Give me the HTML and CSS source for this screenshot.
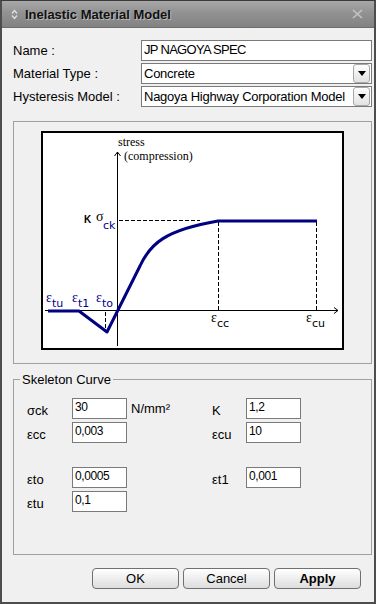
FILE: index.html
```html
<!DOCTYPE html>
<html>
<head>
<meta charset="utf-8">
<title>Inelastic Material Model</title>
<link rel="stylesheet" href="styles.css">
</head>
<body>
<div class="window">
  <div class="titlebar">
    <svg class="title-icon" width="7" height="11" viewBox="0 0 7 11">
      <path d="M1 4.5 L3.5 1.5 L6 4.5" fill="none" stroke="#e0e0e0" stroke-width="1.3"/>
      <path d="M1 6.5 L3.5 9.5 L6 6.5" fill="none" stroke="#e0e0e0" stroke-width="1.3"/>
    </svg>
    <span class="title">Inelastic Material Model</span>
    <svg class="close" width="11" height="10" viewBox="0 0 11 10">
      <path d="M1 1 L10 9 M10 1 L1 9" stroke="#c4c4c4" stroke-width="1.6"/>
    </svg>
  </div>
  <div class="content">
    <div class="row"><span class="lbl">Name :</span><div class="field name">JP NAGOYA SPEC</div></div>
    <div class="row"><span class="lbl">Material Type :</span><div class="field select"><span class="val">Concrete</span><span class="drop"><i class="tri"></i></span></div></div>
    <div class="row"><span class="lbl">Hysteresis Model :</span><div class="field select"><span class="val">Nagoya Highway Corporation Model</span><span class="drop"><i class="tri"></i></span></div></div>

    <div class="diagram-panel">
      <svg class="diagram" width="304" height="220" viewBox="41 131 304 220">
        <rect x="42" y="132" width="301" height="217" fill="#fff" stroke="#000" stroke-width="2"/>
        <g stroke="#000" stroke-width="1" fill="none">
          <line x1="117.5" y1="152" x2="117.5" y2="346"/>
          <polyline points="114.5,156 117.5,152 120.5,156"/>
          <line x1="45" y1="310.5" x2="338" y2="310.5"/>
          <polyline points="334,307.5 338,310.5 334,313.5"/>
        </g>
        <g stroke="#000" stroke-width="1" stroke-dasharray="4 2" fill="none">
          <line x1="119" y1="220.5" x2="200" y2="220.5"/>
          <line x1="218.5" y1="222" x2="218.5" y2="310"/>
          <line x1="316.5" y1="222" x2="316.5" y2="310"/>
          <line x1="105.5" y1="312" x2="105.5" y2="330"/>
        </g>
        <path d="M48,311 L79,311 L107,332 L140,266 C150,244 165,230 218,221 L317,221" stroke="#000080" stroke-width="3" fill="none" stroke-linejoin="round"/>
        <g class="serif">
          <text x="118" y="146">stress</text>
          <text x="124" y="160">(compression)</text>
        </g>
        <text class="kbold" x="84" y="223">K</text>
        <text class="sigma" x="96" y="221">σ</text>
        <text class="sub navy" x="103" y="229">ck</text>
        <g class="navy">
          <text class="eps" x="46" y="302">ε</text><text class="sub" x="52" y="307">tu</text>
          <text class="eps" x="72" y="302">ε</text><text class="sub" x="78" y="307">t1</text>
          <text class="eps" x="96" y="302">ε</text><text class="sub" x="102" y="307">to</text>
        </g>
        <text class="eps" x="211" y="322">ε</text><text class="sub" x="217" y="327">cc</text>
        <text class="eps" x="306" y="322">ε</text><text class="sub" x="312" y="327">cu</text>
      </svg>
    </div>

    <div class="group">
      <span class="legend">Skeleton Curve</span>
      <div class="srow">
        <span class="slab">σck</span><span class="sinp">30</span><span class="unit">N/mm²</span>
        <span class="slab2">K</span><span class="sinp">1,2</span>
      </div>
      <div class="srow">
        <span class="slab">εcc</span><span class="sinp">0,003</span><span class="unit"></span>
        <span class="slab2">εcu</span><span class="sinp">10</span>
      </div>
      <div class="srow sep">
        <span class="slab">εto</span><span class="sinp">0,0005</span><span class="unit"></span>
        <span class="slab2">εt1</span><span class="sinp">0,001</span>
      </div>
      <div class="srow">
        <span class="slab">εtu</span><span class="sinp">0,1</span>
      </div>
    </div>

    <div class="buttons">
      <button class="btn">OK</button>
      <button class="btn">Cancel</button>
      <button class="btn bold">Apply</button>
    </div>
  </div>
</div>
</body>
</html>
```
FILE: styles.css
```css
html, body {
  margin: 0;
  padding: 0;
  background: #f0f0f0;
}

.window {
  width: 376px;
  height: 604px;
  box-sizing: border-box;
  border: 2px solid #4d4d4d;
  border-top: 1px solid #3a3a3a;
  display: flex;
  flex-direction: column;
  background: #f0f0f0;
  font-family: "Liberation Sans", Arial, sans-serif;
  font-size: 13px;
  color: #000;
}

.titlebar {
  height: 26px;
  border-bottom: 1px solid #6e6e6e;
  display: flex;
  align-items: center;
  padding: 0 11px 0 9px;
  background: linear-gradient(#a8a8a8, #929292 45%, #828282);
}

.title-icon {
  display: block;
  margin-right: 7px;
}

.title {
  font-weight: bold;
  font-size: 13px;
  color: #111;
  text-shadow: 1px 1px 0 rgba(220, 220, 220, 0.6);
}

.close {
  display: block;
  margin-left: auto;
}

.content {
  flex: 1;
  padding: 12px 2px 0 11px;
  display: flex;
  flex-direction: column;
}

.row {
  display: flex;
  align-items: center;
  height: 21px;
}

.row + .row {
  margin-top: 2px;
}

.lbl {
  width: 128px;
  flex: none;
}

.field {
  width: 231px;
  height: 21px;
  box-sizing: border-box;
  border: 1px solid #7a7a7a;
  background: #fff;
  display: flex;
  align-items: center;
  padding-left: 2px;
  white-space: nowrap;
  overflow: hidden;
}

.field.name {
  letter-spacing: -0.7px;
  padding-bottom: 2px;
}

.val {
  flex: 1;
  min-width: 0;
  overflow: hidden;
  letter-spacing: -0.25px;
}

.drop {
  flex: none;
  margin-left: 1px;
  margin-right: 1px;
  width: 17px;
  height: 19px;
  box-sizing: border-box;
  border: 1px solid #a8a8a8;
  border-radius: 3px;
  background: linear-gradient(#fdfdfd, #e2e2e2);
  display: flex;
  align-items: center;
  justify-content: center;
}

.tri {
  width: 0;
  height: 0;
  border-left: 4px solid transparent;
  border-right: 4px solid transparent;
  border-top: 5px solid #000;
}

.diagram-panel {
  margin-top: 14px;
  height: 243px;
  box-sizing: border-box;
  border: 1px solid #a0a0a0;
  padding: 9px 0 0 27px;
}

.diagram {
  display: block;
}

.serif {
  font-family: "Liberation Serif", "Times New Roman", serif;
  font-size: 12px;
}

.sigma {
  font-family: "Liberation Serif", "Times New Roman", serif;
  font-size: 14px;
}

.kbold {
  font-family: "Liberation Sans", Arial, sans-serif;
  font-weight: bold;
  font-size: 10px;
}

.sub {
  font-family: "DejaVu Sans", sans-serif;
  font-size: 11px;
}

.eps {
  font-family: "Liberation Serif", "Times New Roman", serif;
  font-size: 14px;
}

.navy {
  fill: #000088;
}

.group {
  margin-top: 15px;
  height: 176px;
  box-sizing: border-box;
  border: 1px solid #a0a0a0;
  position: relative;
  padding: 18px 0 0 13px;
}

.legend {
  position: absolute;
  top: -8px;
  left: 6px;
  padding: 0 2px;
  line-height: 15px;
  background: #f0f0f0;
}

.srow {
  display: flex;
  align-items: center;
  height: 21px;
}

.srow + .srow {
  margin-top: 3px;
}

.srow.sep {
  margin-top: 24px;
}

.slab {
  width: 45px;
  flex: none;
  padding-top: 3px;
}

.slab2 {
  width: 34px;
  flex: none;
  padding-top: 3px;
}

.sinp {
  width: 55px;
  height: 21px;
  flex: none;
  box-sizing: border-box;
  border: 1px solid #7a7a7a;
  background: #fff;
  padding: 1px 0 0 2px;
  font-size: 12px;
  line-height: 14px;
  letter-spacing: -0.4px;
}

.unit {
  width: 81px;
  flex: none;
  padding-left: 4px;
}

.buttons {
  margin-top: 13px;
  display: flex;
  justify-content: flex-end;
  gap: 4px;
  padding-right: 11px;
}

.btn {
  width: 87px;
  height: 21px;
  box-sizing: border-box;
  margin: 0;
  padding: 0;
  border: 1px solid #707070;
  border-radius: 4px;
  background: linear-gradient(#ffffff, #eeeeee 50%, #dddddd);
  font-family: "Liberation Sans", Arial, sans-serif;
  font-size: 13px;
  color: #000;
}

.btn.bold {
  font-weight: bold;
}
```
